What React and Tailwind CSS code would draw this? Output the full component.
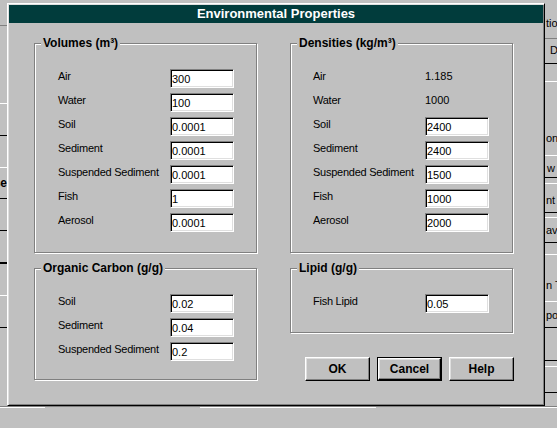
import React from 'react';

const Field = ({ value }) => (
  <input
    type="text"
    defaultValue={value}
    className="w-[64px] h-[19px] pl-[1px] pt-px bg-white text-black text-[11px] border border-t-[#808080] border-l-[#808080] border-r-white border-b-white shadow-[inset_1px_1px_0_#000,inset_-1px_-1px_0_#dfdfdf] outline-none"
  />
);

const Row = ({ label, value, plain }) => (
  <div className="flex h-[24px] items-start">
    <div className="w-[112px] text-[11px] leading-[14px] tracking-[-0.25px] whitespace-nowrap">{label}</div>
    {plain ? <div className="text-[11px] leading-[14px]">{value}</div> : <Field value={value} />}
  </div>
);

const Group = ({ title, className, children }) => (
  <div className={`relative w-[223px] border border-[#808080] shadow-[inset_1px_1px_0_#fff,1px_1px_0_#fff] pt-[25px] ${className}`}>
    <div className="absolute left-[6px] -top-[8px] bg-[#c0c0c0] px-[2px] text-[12px] font-bold leading-[14px] whitespace-nowrap">
      {title}
    </div>
    {children}
  </div>
);

const Button = ({ children, isDefault }) => {
  const face =
    'bg-[#c0c0c0] text-[12px] font-bold text-black border border-t-white border-l-white border-r-black border-b-black shadow-[inset_-1px_-1px_0_#808080,inset_1px_1px_0_#dfdfdf] flex items-center justify-center';
  if (isDefault) {
    return (
      <div className="border border-black">
        <button className={`w-[63px] h-[22px] ${face}`}>{children}</button>
      </div>
    );
  }
  return <button className={`w-[65px] h-[24px] ${face}`}>{children}</button>;
};

const Line = ({ className }) => <div className={`h-px w-full ${className}`} />;

const Frag = ({ className, children }) => (
  <div className={`h-[12px] text-[11px] leading-[12px] whitespace-nowrap ${className}`}>{children}</div>
);

// bits of the window that sits behind the dialog
const LeftStrip = () => (
  <div className="w-[7px] shrink-0 overflow-hidden">
    <Line className="mt-[25px] bg-[#808080]" />
    <Line className="mt-[77px] bg-white" />
    <Line className="mt-[31px] bg-black" />
    <Line className="mt-[31px] bg-white" />
    <div className="mt-[9px] h-[12px] flex justify-end text-[12px] font-bold leading-[12px] whitespace-nowrap">Close</div>
    <Line className="mt-[9px] bg-black" />
    <Line className="mt-[31px] bg-black" />
    <div className="mt-[31px] h-[2px] bg-black" />
    <Line className="mt-[31px] bg-white" />
    <Line className="mt-[31px] bg-black" />
  </div>
);

const RightStrip = () => (
  <div className="w-[12px] shrink-0 overflow-hidden">
    <Frag className="mt-[17px] pl-[1px]">tion</Frag>
    <Line className="mt-[9px] bg-[#808080]" />
    <Frag className="mt-[5px] pl-[5px]">D</Frag>
    <Line className="mt-[7px] bg-black" />
    <Line className="mt-[17px] bg-white" />
    <Frag className="mt-[50px] pl-[1px]">on</Frag>
    <Line className="mt-[11px] bg-white" />
    <Frag className="mt-[6px] pl-[2px]">w</Frag>
    <Line className="mt-[3px] bg-black" />
    <Line className="mt-[5px] bg-white" />
    <Frag className="mt-[10px] pl-[1px]">nt</Frag>
    <Line className="mt-[6px] bg-black" />
    <Line className="mt-[4px] bg-white" />
    <Frag className="mt-[6px] pl-[1px]">av</Frag>
    <Line className="mt-[6px] bg-black" />
    <Line className="mt-[11px] bg-white" />
    <Frag className="mt-[24px] pl-[1px]">n T</Frag>
    <Line className="mt-[10px] bg-white" />
    <Frag className="mt-[7px] pl-[1px]">po</Frag>
    <Line className="mt-[6px] bg-black" />
    <Line className="mt-[32px] bg-black" />
    <Line className="mt-[5px] bg-white" />
    <Line className="mt-[25px] bg-black" />
  </div>
);

const App = () => {
  return (
    <div className="w-[557px] h-[428px] overflow-hidden bg-[#c0c0c0] text-black font-['Liberation_Sans',Arial,sans-serif] flex flex-col">
      <div className="flex h-[406px]">
        <LeftStrip />
        <div className="w-[538px] shrink-0 pt-[3px]">
          <div className="h-[403px] p-px bg-[#c0c0c0] border border-t-white border-l-white border-r-black border-b-black shadow-[inset_1px_1px_0_#dfdfdf,inset_-1px_-1px_0_#808080]">
            <div className="h-[18px] bg-[#013c3c] text-white text-[13px] font-bold leading-[18px] text-center">
              Environmental Properties
            </div>

            <div className="flex pl-[25px] pt-[20px] gap-[33px]">
              <div className="flex flex-col">
                <Group title="Volumes (m³)" className="h-[210px] pl-[23px]">
                  <Row label="Air" value="300" />
                  <Row label="Water" value="100" />
                  <Row label="Soil" value="0.0001" />
                  <Row label="Sediment" value="0.0001" />
                  <Row label="Suspended Sediment" value="0.0001" />
                  <Row label="Fish" value="1" />
                  <Row label="Aerosol" value="0.0001" />
                </Group>
                <Group title="Organic Carbon (g/g)" className="mt-[15px] h-[112px] pl-[23px]">
                  <Row label="Soil" value="0.02" />
                  <Row label="Sediment" value="0.04" />
                  <Row label="Suspended Sediment" value="0.2" />
                </Group>
              </div>

              <div className="flex flex-col">
                <Group title="Densities (kg/m³)" className="h-[210px] pl-[22px]">
                  <Row label="Air" value="1.185" plain />
                  <Row label="Water" value="1000" plain />
                  <Row label="Soil" value="2400" />
                  <Row label="Sediment" value="2400" />
                  <Row label="Suspended Sediment" value="1500" />
                  <Row label="Fish" value="1000" />
                  <Row label="Aerosol" value="2000" />
                </Group>
                <Group title="Lipid (g/g)" className="mt-[15px] h-[65px] pl-[22px]">
                  <Row label="Fish Lipid" value="0.05" />
                </Group>
                <div className="flex gap-[7px] mt-[24px] ml-[15px]">
                  <Button>OK</Button>
                  <Button isDefault>Cancel</Button>
                  <Button>Help</Button>
                </div>
              </div>
            </div>
          </div>
        </div>
        <RightStrip />
      </div>

      <div className="h-[22px]">
        <Line className="bg-[#808080]" />
        <div className="flex h-px">
          <div className="w-[45px] bg-white" />
          <div className="w-[155px]" />
          <div className="w-[176px] bg-white" />
          <div className="w-[124px]" />
          <div className="flex-1 bg-white" />
        </div>
      </div>
    </div>
  );
};

export default App;
